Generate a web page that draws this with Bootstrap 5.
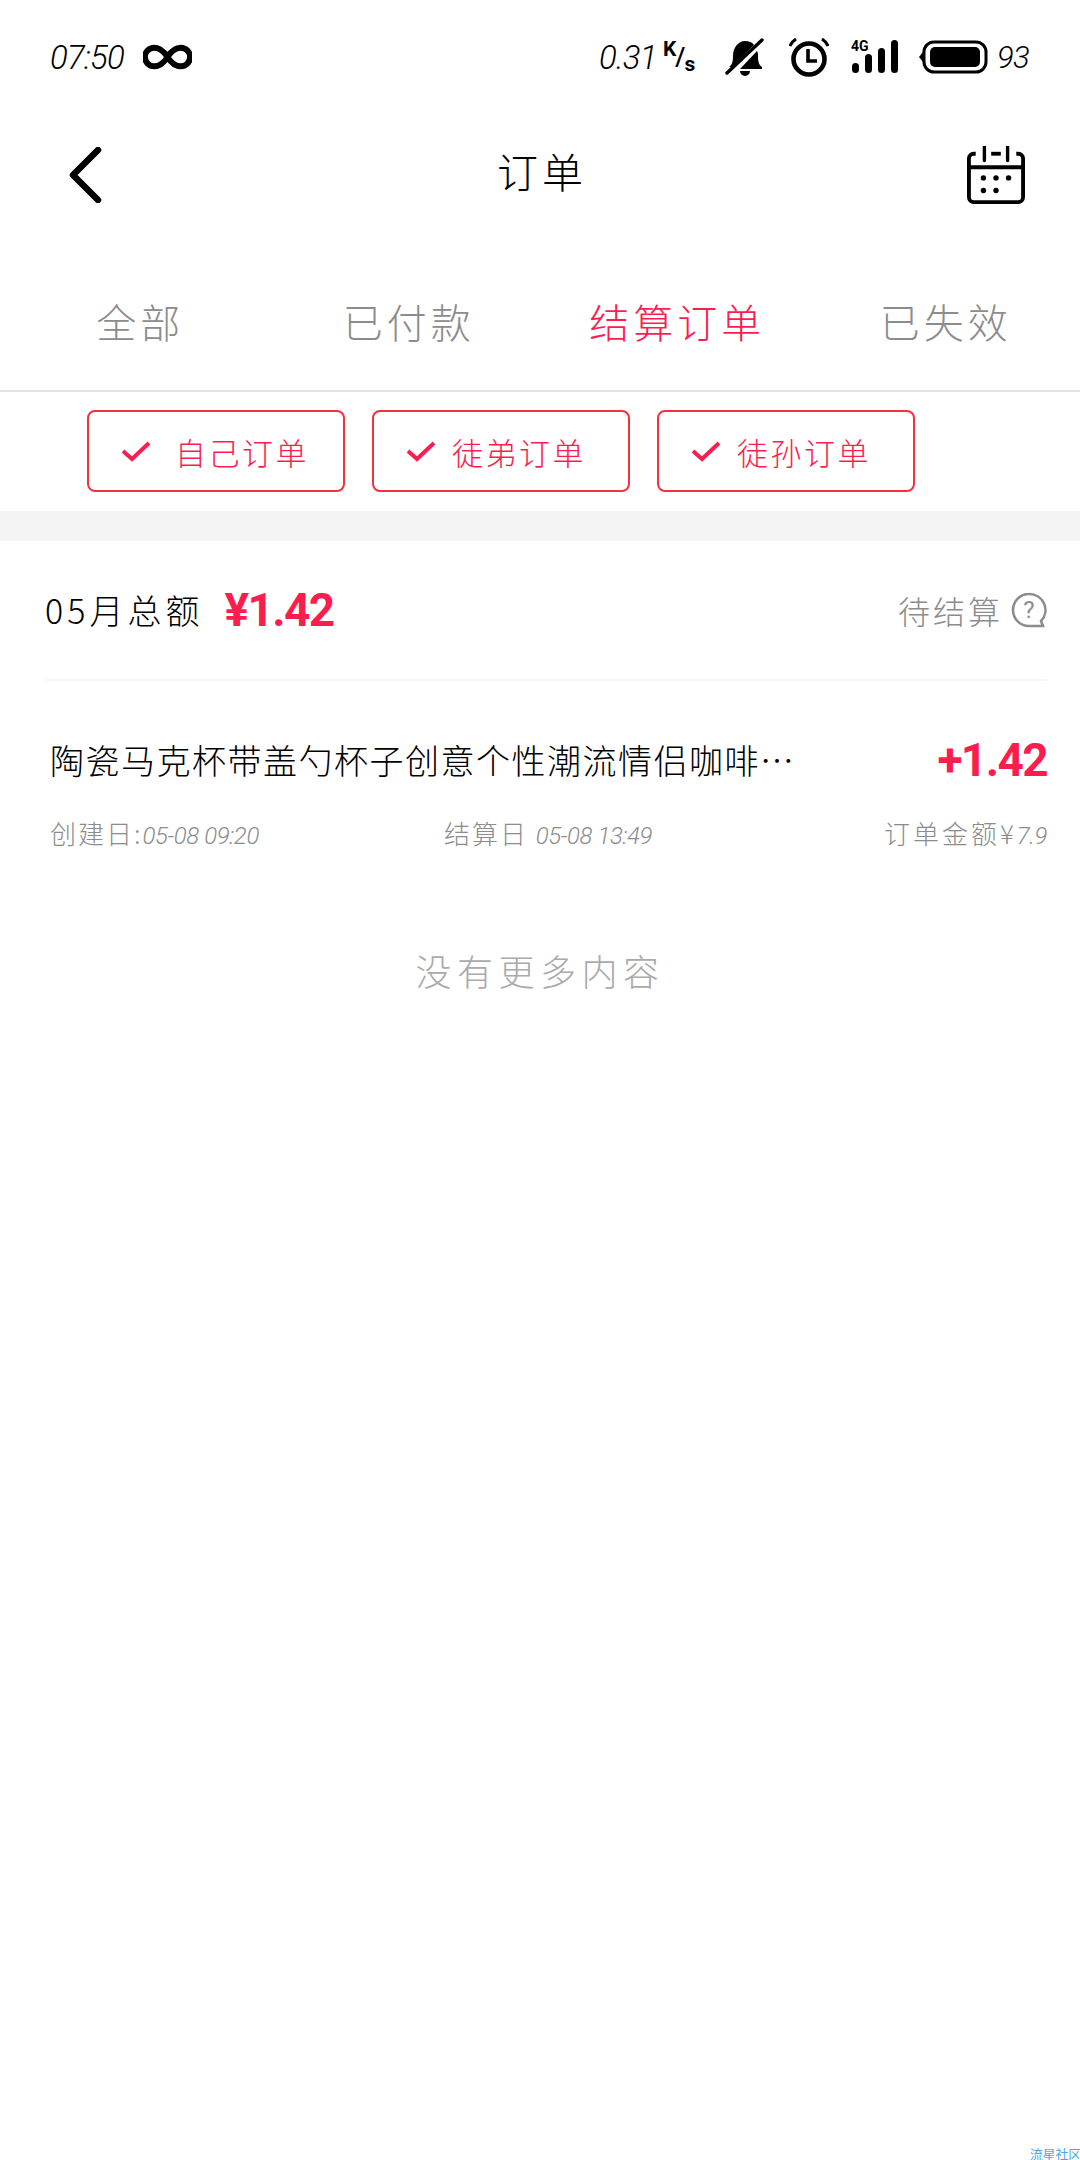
<!DOCTYPE html>
<html lang="zh-CN">
<head>
<meta charset="utf-8">
<title>订单</title>
<link rel="stylesheet" href="https://cdn.jsdelivr.net/npm/bootstrap@5.3.0/dist/css/bootstrap.min.css">
<style>
html,body{height:2160px;overflow:hidden;background:#fff}
body{position:relative;font-family:"Noto Sans CJK SC","Noto Sans",sans-serif;font-weight:300;color:#000}
.thin-num{font-family:Roboto,"Noto Sans CJK SC",sans-serif;font-weight:300;font-style:italic}
.strong-num{font-family:Roboto,sans-serif;font-weight:700;color:#fa1e4e;font-size:46px;line-height:1;letter-spacing:-1.6px}
.status-row{height:114px;padding:0 50px}
.status-row .thin-num{font-size:33px;line-height:1;letter-spacing:-.8px}
.speed-unit{font-family:Roboto,sans-serif;font-weight:700;line-height:1;width:36px;height:36px}
.unit-k{font-size:21px;align-self:flex-start}
.unit-bar{font-size:26px;font-weight:500;align-self:center;margin:0 -1px}
.unit-s{font-size:21px;align-self:flex-end}
.title-row{height:122px;padding:0 54px 0 68px}
.page-title{font-size:41px;letter-spacing:4px;line-height:1;margin:0 0 10px 16px}
.tabs-row{height:156px;padding:18px 0 0 6px;border-bottom:2px solid #e4e4e4}
.tab-label{font-size:40px;letter-spacing:4px;color:#8c8c8c;line-height:1}
.tab-label.on{color:#fa1e4e}
.chips-row{height:119px;padding:18px 0 0 87px;gap:27px}
.chip-box{width:258px;height:82px;border:2px solid #f5303f;border-radius:8px;color:#fa1e4e;font-size:31px;letter-spacing:2.5px;line-height:1;padding-left:32px;gap:24px}
.chip-tight{gap:16px}
.band{height:30px;background:#f4f4f4}
.sum-row{height:140px;margin:0 33px 0 45px;border-bottom:2px solid #f6f6f6}
.sum-label{font-size:34px;letter-spacing:4px;line-height:1;margin-right:21px}
.pending{font-size:32px;letter-spacing:3px;color:#8c8c8c;line-height:1}
.order-top{margin:0 33px 0 50px;padding-top:50px;height:108px}
.order-name{font-size:34px;letter-spacing:1.5px;line-height:1;white-space:nowrap}
.order-meta{margin:0 33px 0 50px;height:90px;font-size:26px;letter-spacing:2px;color:#8c8c8c;line-height:1}
.order-meta .thin-num{font-size:24px;letter-spacing:-.4px}
.meta-created{width:394px}
.meta-total{letter-spacing:3px}
.more-note{margin-top:73px;font-size:36px;letter-spacing:5.5px;color:#aaa;line-height:1}
.mark-note{position:absolute;right:-1px;bottom:0;font-size:13px;line-height:1;color:#4aa8f0;font-weight:400;letter-spacing:-.2px}
</style>
</head>
<body>
<div class="status-row d-flex align-items-center">
  <span class="thin-num" style="width:72px">07:50</span>
  <svg style="margin-left:21px" width="49" height="26" viewBox="0 0 50 26"><path d="M25 13C20 5 15 3.500 11.500 3.500a9.500 9.500 0 0 0 0 19c3.500 0 8.500-1.500 13.500-9.500s10-9.500 13.500-9.500a9.500 9.500 0 0 1 0 19c-3.500 0-8.500-1.500-13.500-9.500z" fill="none" stroke="#000" stroke-width="6"/></svg>
  <div class="ms-auto d-flex align-items-center">
    <span class="thin-num" style="width:64px">0.31</span>
    <div class="speed-unit d-flex me-4"><span class="unit-k">K</span><span class="unit-bar">/</span><span class="unit-s">s</span></div>
    <svg width="40" height="40" viewBox="0 0 40 40" style="margin-left:2px"><path d="M4 30c3-2 4-5 4-11 0-8 5-15 12-15 4 0 7 1 9 4L7 30z M32 14c1 2 1 3 1 5 0 6 1 9 4 11v2H15z M15 34h10a5 5 0 0 1-10 0z" fill="#000"/><path d="M2 36L37 3" stroke="#000" stroke-width="3.400" stroke-linecap="round"/></svg>
    <svg width="40" height="40" viewBox="0 0 40 40" style="margin-left:24px"><circle cx="20" cy="22" r="15.500" fill="none" stroke="#000" stroke-width="4.600"/><path d="M19 12v12h9" fill="none" stroke="#000" stroke-width="3.600"/><path d="M1 9c1-3 3-5 6-7M39 9c-1-3-3-5-6-7" fill="none" stroke="#000" stroke-width="3"/></svg>
    <svg width="48" height="36" viewBox="0 0 48 36" style="margin-left:22px"><text x="0" y="12" font-family="Roboto" font-weight="700" font-size="14">4G</text><g fill="#000"><rect x="1" y="24" width="7" height="10" rx="3.500"/><rect x="14" y="15" width="7" height="19" rx="3.500"/><rect x="27" y="9" width="7" height="25" rx="3.500"/><rect x="40" y="1" width="7" height="33" rx="3.500"/></g></svg>
    <svg width="70" height="34" viewBox="0 0 70 34" style="margin-left:20px"><path d="M0 17l4-5v10z" fill="#000"/><rect x="5" y="2" width="62" height="30" rx="10" fill="none" stroke="#000" stroke-width="3"/><rect x="11" y="7" width="50" height="20" rx="5" fill="#000"/></svg>
    <span class="thin-num ms-2" style="width:33px;font-size:31px">93</span>
  </div>
</div>

<div class="title-row d-flex align-items-center justify-content-between">
  <svg width="34" height="56" viewBox="0 0 34 56"><path d="M30 3L5 28l25 25" fill="none" stroke="#000" stroke-width="6.500" stroke-linecap="round" stroke-linejoin="round"/></svg>
  <span class="page-title">订单</span>
  <svg width="60" height="58" viewBox="0 0 60 60"><path d="M9 8H7a5 5 0 0 0-5 5v40a5 5 0 0 0 5 5h46a5 5 0 0 0 5-5V13a5 5 0 0 0-5-5h-2" fill="none" stroke="#000" stroke-width="4"/><path d="M2 22h56" stroke="#000" stroke-width="4"/><path d="M18 1v14M42 1v14" stroke="#000" stroke-width="3.500" stroke-linecap="round"/><path d="M25 8h10" stroke="#000" stroke-width="4"/><g fill="#000"><circle cx="17" cy="33" r="2.800"/><circle cx="30" cy="33" r="2.800"/><circle cx="43" cy="33" r="2.800"/><circle cx="17" cy="46" r="2.800"/><circle cx="30" cy="46" r="2.800"/></g></svg>
</div>

<div class="tabs-row row g-0 align-items-center text-center">
  <div class="col-3"><span class="tab-label">全部</span></div>
  <div class="col-3"><span class="tab-label">已付款</span></div>
  <div class="col-3"><span class="tab-label on">结算订单</span></div>
  <div class="col-3"><span class="tab-label">已失效</span></div>
</div>

<div class="chips-row d-flex align-items-start">
  <div class="chip-box d-flex align-items-center"><svg width="30" height="22" viewBox="0 0 30 22"><path d="M2 11l9 8L28 3" fill="none" stroke="#fa1e4e" stroke-width="4"/></svg><span>自己订单</span></div>
  <div class="chip-box chip-tight d-flex align-items-center"><svg width="30" height="22" viewBox="0 0 30 22"><path d="M2 11l9 8L28 3" fill="none" stroke="#fa1e4e" stroke-width="4"/></svg><span>徒弟订单</span></div>
  <div class="chip-box chip-tight d-flex align-items-center"><svg width="30" height="22" viewBox="0 0 30 22"><path d="M2 11l9 8L28 3" fill="none" stroke="#fa1e4e" stroke-width="4"/></svg><span>徒孙订单</span></div>
</div>

<div class="band"></div>

<div class="sum-row d-flex align-items-center">
  <span class="sum-label">05月总额</span>
  <span class="strong-num">¥1.42</span>
  <span class="pending ms-auto">待结算</span>
  <svg class="ms-2" width="36" height="36" viewBox="0 0 36 36"><path d="M18 2a16 16 0 1 0 0 32h14l-2-5a16 16 0 0 0-12-27z" fill="none" stroke="#8c8c8c" stroke-width="2.600"/><text x="18" y="26" text-anchor="middle" font-family="Roboto" font-size="24" font-weight="400" fill="#8c8c8c">?</text></svg>
</div>

<div class="order-top d-flex align-items-center justify-content-between">
  <span class="order-name">陶瓷马克杯带盖勺杯子创意个性潮流情侣咖啡…</span>
  <span class="strong-num">+1.42</span>
</div>
<div class="order-meta d-flex align-items-center">
  <span class="meta-created">创建日:<span class="thin-num">05-08 09:20</span></span>
  <span>结算日 <span class="thin-num">05-08 13:49</span></span>
  <span class="meta-total ms-auto">订单金额¥<span class="thin-num">7.9</span></span>
</div>
<div class="more-note text-center">没有更多内容</div>

<div class="mark-note">流星社区</div>
<script src="https://cdn.jsdelivr.net/npm/bootstrap@5.3.0/dist/js/bootstrap.bundle.min.js"></script>
</body>
</html>
